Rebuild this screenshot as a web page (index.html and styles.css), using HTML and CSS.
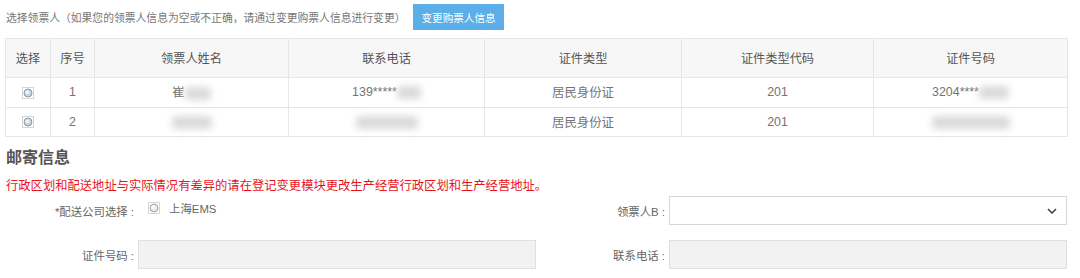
FILE: index.html
```html
<!DOCTYPE html>
<html lang="zh-CN">
<head>
    <meta charset="UTF-8">
    <title>领票人信息</title>
    <link rel="stylesheet" href="styles.css">
</head>
<body>
    <div class="top-bar">
        <span class="tip">选择领票人（如果您的领票人信息为空或不正确，请通过变更购票人信息进行变更）</span>
        <button class="btn-blue">变更购票人信息</button>
    </div>

    <table class="grid">
        <thead>
            <tr>
                <th class="c-sel">选择</th>
                <th class="c-no">序号</th>
                <th class="c-name">领票人姓名</th>
                <th class="c-tel">联系电话</th>
                <th class="c-type">证件类型</th>
                <th class="c-code">证件类型代码</th>
                <th>证件号码</th>
            </tr>
        </thead>
        <tbody>
            <tr>
                <td><span class="radio"><svg width="12" height="12" viewBox="0 0 12 12"><rect x="0.5" y="0.5" width="11" height="11" fill="#fff" stroke="#d6d6d6"/><circle cx="6" cy="6" r="4" fill="#c9d3dc" stroke="#8c9aa6"/><circle cx="5.3" cy="5.3" r="2" fill="#eef2f5"/></svg></span></td>
                <td>1</td>
                <td>崔<span class="blur w26"></span></td>
                <td>139*****<span class="blur w24"></span></td>
                <td>居民身份证</td>
                <td>201</td>
                <td>3204****<span class="blur w30"></span></td>
            </tr>
            <tr>
                <td><span class="radio"><svg width="12" height="12" viewBox="0 0 12 12"><rect x="0.5" y="0.5" width="11" height="11" fill="#fff" stroke="#d6d6d6"/><circle cx="6" cy="6" r="4" fill="#c9d3dc" stroke="#8c9aa6"/><circle cx="5.3" cy="5.3" r="2" fill="#eef2f5"/></svg></span></td>
                <td>2</td>
                <td><span class="blur w40"></span></td>
                <td><span class="blur w62"></span></td>
                <td>居民身份证</td>
                <td>201</td>
                <td><span class="blur w78"></span></td>
            </tr>
        </tbody>
    </table>

    <h2 class="section-title">邮寄信息</h2>
    <p class="warn">行政区划和配送地址与实际情况有差异的请在登记变更模块更改生产经营行政区划和生产经营地址。</p>

    <div class="form">
        <label class="lbl">*配送公司选择 :</label>
        <div class="field-radio">
            <span class="radio"><svg width="12" height="12" viewBox="0 0 12 12"><rect x="0.5" y="0.5" width="11" height="11" fill="#fff" stroke="#d6d6d6"/><circle cx="6" cy="6" r="4" fill="#e6e9ec" stroke="#9aa4ad"/><circle cx="5.3" cy="5.3" r="2" fill="#f7f8f9"/></svg></span>
            <span>上海EMS</span>
        </div>
        <label class="lbl">领票人B :</label>
        <div class="select">
            <svg width="10" height="6" viewBox="0 0 10 6"><path d="M1 1 L5 5 L9 1" fill="none" stroke="#444" stroke-width="1.6"/></svg>
        </div>

        <label class="lbl">证件号码 :</label>
        <div class="input disabled"></div>
        <label class="lbl">联系电话 :</label>
        <div class="input disabled"></div>
    </div>
</body>
</html>
```

FILE: styles.css
```css
* {
    box-sizing: border-box;
}
body {
    margin: 0;
    background-color: #fff;
    color: #666;
    font-family: "Liberation Sans", "Noto Sans CJK SC", sans-serif;
    font-size: 12px;
}
.top-bar {
    display: flex;
    align-items: center;
    gap: 8px;
    height: 34px;
    padding: 0 6px;
}
.tip {
    font-size: 10.8px;
    color: #777;
}
.btn-blue {
    height: 26px;
    padding: 0 8px;
    border: none;
    background-color: #5caee8;
    color: #fff;
    font-family: inherit;
    font-size: 10.6px;
}
.grid {
    margin: 4px 0 0 5px;
    width: 1063px;
    border-collapse: collapse;
    table-layout: fixed;
    border: 1px solid #e2e2e2;
}
.grid th, .grid td {
    border: 1px solid #e6e6e6;
    text-align: center;
    padding: 0;
}
.grid th {
    height: 39px;
    background-color: #f7f7f7;
    color: #555;
    font-weight: normal;
    font-size: 12.2px;
}
.grid td {
    height: 29.5px;
    font-size: 12.4px;
    color: #747474;
}
.c-sel { width: 45px; }
.c-no { width: 44px; }
.c-name { width: 194px; }
.c-tel { width: 196px; }
.c-type { width: 197px; }
.c-code { width: 192px; }
.radio {
    display: inline-block;
    width: 12px;
    height: 12px;
    vertical-align: middle;
}
.radio svg {
    display: block;
}
.blur {
    display: inline-block;
    height: 13px;
    vertical-align: middle;
    background-color: #dadada;
    border-radius: 4px;
    filter: blur(3.5px);
}
.w24 { width: 24px; }
.w26 { width: 26px; }
.w30 { width: 30px; }
.w40 { width: 40px; }
.w62 { width: 62px; }
.w78 { width: 78px; }
.section-title {
    margin: 10px 0 0 6px;
    font-size: 16px;
    font-weight: bold;
    color: #555;
    line-height: 22px;
}
.warn {
    margin: 9px 0 0 6px;
    color: #e8141c;
    font-size: 12.3px;
    line-height: 16px;
}
.form {
    display: grid;
    grid-template-columns: 138px 398px 133px 398px;
    grid-auto-rows: 29px;
    row-gap: 15px;
    align-items: center;
    margin-top: 2px;
    font-size: 11.4px;
    color: #666;
}
.lbl {
    text-align: right;
    padding-right: 4px;
}
.field-radio {
    display: flex;
    align-items: center;
    gap: 9px;
    padding-left: 10px;
    align-self: start;
    height: 24px;
}
.select {
    display: flex;
    justify-content: flex-end;
    align-items: center;
    height: 29px;
    padding-right: 9px;
    border: 1px solid #d8d8d8;
    background-color: #fff;
}
.input {
    height: 29px;
    border: 1px solid #e0e0e0;
}
.input.disabled {
    background-color: #f2f2f2;
}
```
